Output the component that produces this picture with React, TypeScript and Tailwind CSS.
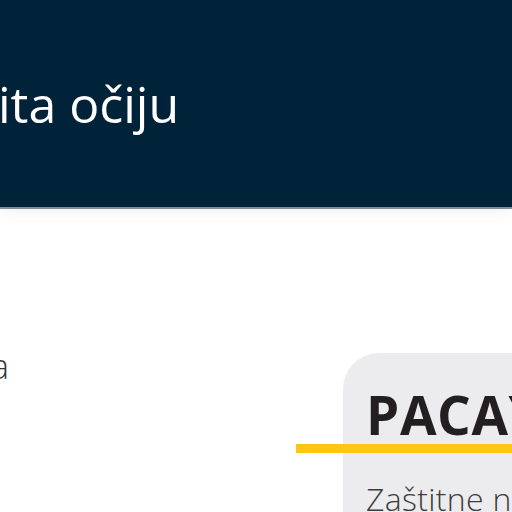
import React from "react";

export default function App() {
  return (
    <div
      className="w-[512px] h-[512px] overflow-hidden bg-white flex flex-col"
      style={{ fontFamily: '"Open Sans", "Noto Sans", sans-serif' }}
    >
      <header className="h-[209px] shrink-0 bg-[#00233a] border-b-2 border-[#7f8c95] shadow-[0_4px_14px_rgba(0,0,0,0.05)] pt-[79px]">
        <h1 className="text-[50px] leading-none font-normal text-white whitespace-nowrap -ml-[2px]">
          ita očiju
        </h1>
      </header>
      <main className="flex flex-1 pt-[144px]">
        <div className="w-[343px] shrink-0 overflow-hidden">
          <p className="-mt-[4px] -ml-[9px] text-[34px] leading-none font-light text-[#333333]">a</p>
        </div>
        <section className="relative flex-1 bg-[#ececee] rounded-tl-[36px] pl-[23px] pt-[35px] whitespace-nowrap">
          <h2 className="text-[53px] leading-none font-bold text-[#231f20] tracking-[0.6px]">
            PACAYA
          </h2>
          <div className="absolute top-[91px] left-[-47px] right-0 h-[9px] bg-[#fdc614]" />
          <p className="mt-[42px] text-[32px] leading-none font-light text-[#3d3d3d] tracking-[0.3px]">
            Zaštitne naočale
          </p>
        </section>
      </main>
    </div>
  );
}
